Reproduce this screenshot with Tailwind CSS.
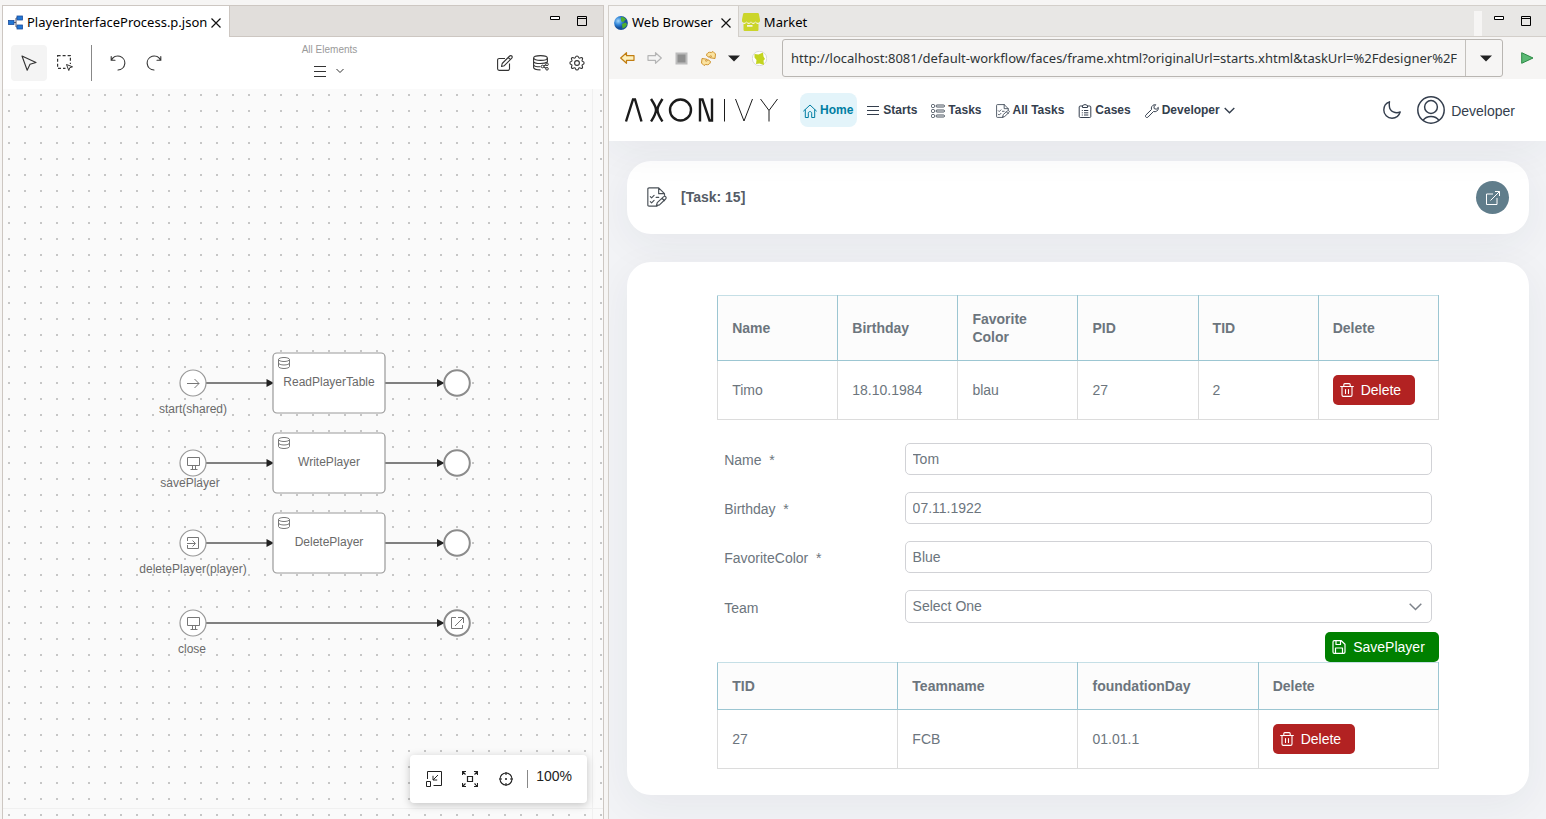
<!DOCTYPE html>
<html lang="en">
<head>
<meta charset="utf-8">
<title>Player Interface Process</title>
<script src="https://cdn.jsdelivr.net/npm/@tailwindcss/browser@4"></script>
</head>
<body class="h-screen overflow-hidden bg-[#f6f5f4] font-['Liberation_Sans',Arial,sans-serif] text-sm text-[#6c757d]">
<svg class="hidden">
  <defs>
    <symbol id="tasklist" viewBox="0 0 24 24"><g fill="none" stroke="currentColor" stroke-width="1.4" stroke-linejoin="round" stroke-linecap="round"><path d="M12 23H2.500C1.500 23 1 22.500 1 21.500v-19C1 1.500 1.500 1 2.500 1H14l7 7v2M14 1v7h7M4 11.500l1.500 1.500 3-3M4 17.500l1.500 1.500 3-3M11 12.500h3"/><path d="M20 11.500c1-1 2.700 0 3 1.200.1.700-.2 1.200-.7 1.700l-7.300 7-3.700 1 1-3.700zM18 13.500l3 3"/></g></symbol>
    <symbol id="trash" viewBox="0 0 14 14"><g fill="none" stroke="currentColor" stroke-width="1.1" stroke-linecap="round" stroke-linejoin="round"><path d="M.6 3.500h12.800M2 3.500v8.600c0 .8.500 1.300 1.300 1.300h7.400c.8 0 1.300-.5 1.300-1.300V3.500M3.800 3.300V1.700c0-.6.400-1.100 1-1.100h4.400c.6 0 1 .5 1 1.100v1.600M5.500 6.500v4M8.500 6.500v4"/></g></symbol>
    <symbol id="db" viewBox="0 0 12 12"><g fill="none" stroke="#777" stroke-width="1"><ellipse cx="6" cy="2.500" rx="5.500" ry="2"/><path d="M.5 2.500v7c0 1.100 2.500 2 5.500 2s5.500-.9 5.500-2v-7M.5 6c0 1.100 2.500 2 5.500 2s5.500-.9 5.500-2"/></g></symbol>
    <symbol id="monitor" viewBox="0 0 13 13"><path d="M.5.5h12v8H.5zM5.500 8.500v4M8.500 8.500v4M3.500 12.500h7" fill="none" stroke="#777"/></symbol>
  </defs>
</svg>

<div class="grid h-full grid-cols-[602fr_938fr] gap-1 pt-[5px] pl-0.5">

  <!-- Process editor -->
  <section class="flex min-w-0 flex-col border-x border-t border-[#cdc7c2] bg-white">
    <div class="flex h-[31px] shrink-0 bg-[#e1dedb] font-['Noto_Sans',sans-serif] text-[13px] text-black">
      <div class="flex items-center gap-1 border-r border-[#cdc7c2] bg-white pt-0.5 pr-2 pl-[5px]">
        <svg class="size-[15px]" viewBox="0 0 15 15"><path d="M5 7.500h3M10 3H8v9h2" fill="none" stroke="#556" stroke-width="1"/><g fill="#2277d4" stroke="#1c4d9c" stroke-width=".8"><rect x=".5" y="5.500" width="5.500" height="4"/><rect x="9" y="1" width="5.500" height="4"/><rect x="9" y="10" width="5.500" height="4"/></g></svg>
        <span>PlayerInterfaceProcess.p.json</span>
        <button aria-label="Close editor"><svg class="size-[10px]" viewBox="0 0 10 10"><path d="M.5.5l9 9M9.500.5l-9 9" stroke="#111" stroke-width="1.200"/></svg></button>
      </div>
      <div class="flex flex-1 items-start justify-end gap-[17px] border-b border-[#cdc7c2] pt-[10px] pr-4">
        <button aria-label="Minimize"><svg class="block h-1 w-[10px]"><path d="M.5.5h9v3h-9z" fill="#fff" stroke="#000"/></svg></button>
        <button aria-label="Maximize"><svg class="block size-[10px]"><path d="M.5.5h9v9h-9zM0 2.500h10" fill="none" stroke="#000"/></svg></button>
      </div>
    </div>

    <div class="flex h-[52px] shrink-0 items-center justify-between px-2 text-[#333]">
      <div class="flex items-center">
        <button class="grid size-9 place-items-center rounded-sm bg-[#f4f4f4]" aria-label="Select"><svg class="size-4" viewBox="0 0 16 16"><path d="M1 1l14 6.500-6 1.800-2.800 6z" fill="none" stroke="currentColor" stroke-width="1.100" stroke-linejoin="round"/></svg></button>
        <button class="grid size-9 place-items-center" aria-label="Marquee"><svg class="size-4" viewBox="0 0 16 16"><rect x=".6" y=".6" width="12.800" height="12.800" fill="none" stroke="currentColor" stroke-width="1.200" stroke-dasharray="3 2"/><path d="M8.500 9h7.500v7H8.500z" fill="#fff"/><path d="M9.500 9.500l6 2.300-2.700.9-1 2.800z" fill="#fff" stroke="currentColor" stroke-linejoin="round"/></svg></button>
        <div class="mx-2 h-9 w-px bg-[#888]"></div>
        <button class="grid size-9 place-items-center" aria-label="Undo"><svg class="size-4" viewBox="0 0 16 16"><path d="M1.200 1.500v3.800H5M1.500 5A7 7 0 1 1 8 15" fill="none" stroke="currentColor" stroke-width="1.100" stroke-linecap="round"/></svg></button>
        <button class="grid size-9 place-items-center" aria-label="Redo"><svg class="size-4" viewBox="0 0 16 16"><path d="M14.800 1.500v3.800H11M14.500 5A7 7 0 1 0 8 15" fill="none" stroke="currentColor" stroke-width="1.100" stroke-linecap="round"/></svg></button>
      </div>
      <div class="flex flex-col items-center gap-[9px] pb-1.5">
        <span class="text-[10px] leading-3 text-[#9a9a9a]">All Elements</span>
        <button class="flex items-center gap-2.5" aria-label="All elements"><svg class="h-[12px] w-3"><path d="M0 1.500h12M0 6.500h12M0 11.500h12" stroke="currentColor"/></svg><svg class="h-[6px] w-2"><path d="M.5 1L4 4.500 7.500 1" fill="none" stroke="currentColor"/></svg></button>
      </div>
      <div class="flex">
        <button class="grid size-9 place-items-center" aria-label="Edit"><svg class="size-4" viewBox="0 0 16 16"><g fill="none" stroke="currentColor" stroke-width="1.100" stroke-linejoin="round"><path d="M8 3.500H2.200C1.200 3.500.6 4 .6 5v8.800c0 1 .6 1.600 1.600 1.600H11c1 0 1.500-.6 1.500-1.600V8.500"/><path d="M4.500 11.500l.7-3L12.700 1c.6-.6 1.600-.5 2.100 0 .6.600.6 1.500 0 2.100L7.300 10.700zM11.300 2.500l2.100 2.100"/></g></svg></button>
        <button class="grid size-9 place-items-center" aria-label="Data"><svg class="size-4" viewBox="0 0 16 16"><g fill="none" stroke="currentColor" stroke-width="1.100"><ellipse cx="7.500" cy="3" rx="6.900" ry="2.400"/><path d="M.6 3v9.500c0 1.200 3 2.400 6.900 2.400M14.400 3v4.500M.6 6.200c0 1.300 3 2.300 6.900 2.300 3 0 5.500-.6 6.900-1.500M.6 9.400c0 1.300 3 2.400 6.900 2.400"/><path d="M10 11.500l3.500-2M10 11.500l3.500 2"/></g><g fill="#fff" stroke="currentColor"><circle cx="9.500" cy="11.500" r="1.300"/><circle cx="14" cy="9.300" r="1.300"/><circle cx="14" cy="13.800" r="1.300"/></g></svg></button>
        <button class="grid size-9 place-items-center" aria-label="Settings"><svg class="size-4" viewBox="0 0 16 16"><g fill="none" stroke="currentColor" stroke-width="1.100" stroke-linejoin="round"><path d="M6.500 2.200C7 .6 9 .6 9.500 2.200s1.500 1 2.300.6c1.300-.6 2.200.4 1.600 1.700-.4.800-.8 1.700.5 2 1.600.5 1.600 2.500 0 3-1.300.4-.9 1.200-.5 2 .6 1.300-.4 2.300-1.600 1.700-.8-.4-1.900-.9-2.300.6-.5 1.600-2.500 1.600-3 0-.4-1.500-1.500-1-2.300-.6-1.200.6-2.200-.4-1.600-1.700.4-.8.800-1.600-.5-2-1.600-.5-1.600-2.500 0-3 1.300-.3.900-1.200.5-2-.6-1.300.3-2.300 1.600-1.700.8.400 1.900 1 2.300-.6z"/><circle cx="8" cy="8" r="2.400"/></g></svg></button>
      </div>
    </div>

    <div class="relative min-h-0 flex-1 bg-[#fafafa]">
      <svg class="absolute inset-0 h-full w-full font-['Liberation_Sans',Arial,sans-serif] text-[12px]" role="img" aria-label="Process diagram">
        <defs>
          <pattern id="dots" x="5" y="5" width="16" height="16" patternUnits="userSpaceOnUse"><rect width="2" height="2" fill="#c6c6c6"/></pattern>
        </defs>
        <rect width="100%" height="100%" fill="url(#dots)"/>
        <path d="M589.500 0v730M0 719.500h600" stroke="#f0f0f0"/>
        <!-- edges -->
        <g stroke="#808080" stroke-width="2"><path d="M203 294h62M382 294h54M203 374h62M382 374h54M203 454h62M382 454h54M203 534h233"/></g>
        <g fill="#222"><path d="M263.500 290l7.500 4-7.500 4zM434 290l7.500 4-7.500 4zM263.500 370l7.500 4-7.500 4zM434 370l7.500 4-7.500 4zM263.500 450l7.500 4-7.500 4zM434 450l7.500 4-7.500 4zM434 530l7.500 4-7.500 4z"/></g>
        <!-- nodes -->
        <g fill="#fff" stroke="#999">
          <g stroke-width="1.200"><circle cx="190" cy="294" r="13"/><circle cx="190" cy="374" r="13"/><circle cx="190" cy="454" r="13"/><circle cx="190" cy="534" r="13"/>
          <rect x="270" y="264" width="112" height="60" rx="4"/><rect x="270" y="344" width="112" height="60" rx="4"/><rect x="270" y="424" width="112" height="60" rx="4"/></g>
          <g stroke="#8c8c8c" stroke-width="2"><circle cx="454" cy="294" r="12.800"/><circle cx="454" cy="374" r="12.800"/><circle cx="454" cy="454" r="12.800"/><circle cx="454" cy="534" r="12.800"/></g>
        </g>
        <use href="#db" x="275" y="268" width="12" height="12"/><use href="#db" x="275" y="348" width="12" height="12"/><use href="#db" x="275" y="428" width="12" height="12"/>
        <use href="#monitor" x="184" y="368" width="13" height="13"/><use href="#monitor" x="184" y="528" width="13" height="13"/>
        <g fill="none" stroke="#777"><path d="M184 294.500h12M191.500 290l4.500 4.500-4.500 4.500"/><path d="M184.500 452v-3.500h11v11h-11V456M184 454.500h8M189.500 451.500l3 3-3 3"/><path d="M453 528.500h-4.500v11h11V536M455 528.500h5.500v5.500M452 537l8-8"/></g>
        <g fill="#6a6a6a" text-anchor="middle"><text x="326" y="297">ReadPlayerTable</text><text x="326" y="377">WritePlayer</text><text x="326" y="457">DeletePlayer</text><text x="190" y="324">start(shared)</text><text x="187" y="398">savePlayer</text><text x="190" y="484">deletePlayer(player)</text><text x="189" y="564">close</text></g>
      </svg>
      <div class="absolute right-4 bottom-4 flex h-12 items-center rounded bg-white pr-[15px] pl-1.5 text-[#222] shadow-[0_2px_8px_rgba(0,0,0,0.22)]">
        <button class="grid size-9 place-items-center" aria-label="Origin screen"><svg class="size-4" viewBox="0 0 16 16"><path d="M1.500 8V.5h14v14H7.500M.5 10.500h4v5h-4zM12 4L7 9M7 4.800V9h4.200" fill="none" stroke="currentColor"/></svg></button>
        <button class="grid size-9 place-items-center" aria-label="Fit to screen"><svg class="size-4" viewBox="0 0 16 16"><path d="M5.500 5.500h5v5h-5zM.5 4V.5H4M.5.500L3.500 3.500M12 .5h3.500V4M15.500.500L12.500 3.500M.5 12v3.500H4M.5 15.500l3-3M12 15.500h3.500V12M15.500 15.500l-3-3" fill="none" stroke="currentColor" stroke-width="1.200"/></svg></button>
        <button class="grid size-9 place-items-center" aria-label="Center"><svg class="size-4" viewBox="0 0 16 16"><g fill="none" stroke="currentColor" stroke-width="1.100"><circle cx="8" cy="8" r="6"/><path d="M8 1v3M8 12v3M1 8h3M12 8h3M7 8h2M8 7v2"/></g></svg></button>
        <div class="mr-2 ml-[3px] h-[18px] w-px bg-[#888]"></div>
        <span class="pb-1.5">100%</span>
      </div>
    </div>
  </section>

  <!-- Web browser -->
  <section class="flex min-w-0 flex-col border-t border-l border-[#d3cfca]">
    <div class="flex h-[31px] shrink-0 bg-[#e8e7e5] font-['Noto_Sans',sans-serif] text-[13px] text-black">
      <div class="flex items-center gap-1 border-r border-[#d3cfca] bg-[#f6f5f4] pt-0.5 pr-[7px] pl-[5px]">
        <svg class="size-[14px]" viewBox="0 0 14 14"><defs><radialGradient id="globe" cx=".3" cy=".35"><stop offset="0" stop-color="#a5d8fa"/><stop offset=".6" stop-color="#2d82d6"/><stop offset="1" stop-color="#16509a"/></radialGradient></defs><circle cx="7" cy="7" r="6.900" fill="url(#globe)"/><path d="M7 1c2-.5 4 .8 5 2.500l-2 1.500-1 1.500-2-1.500zM8 8l3.500-1.500 1.500 1.500c-.7 2.500-2 3.700-4.500 4.500z" fill="#4fae2e"/></svg>
        <span>Web Browser</span>
        <button class="ml-1" aria-label="Close browser"><svg class="size-[10px]" viewBox="0 0 10 10"><path d="M.5.5l9 9M9.500.5l-9 9" stroke="#111" stroke-width="1.200"/></svg></button>
      </div>
      <div class="flex flex-1 items-center gap-1 border-b border-[#d3cfca] pl-[3px]">
        <svg class="mt-0.5 size-[18px]" viewBox="0 0 18 18"><path d="M1.500 8h15v8.500c0 1-.5 1.500-1.500 1.500H3c-1 0-1.500-.5-1.500-1.500z" fill="#cbd52a"/><path d="M0 8.500c0 3.300 4.500 3.300 4.500 0 0 3.300 4.500 3.300 4.500 0 0 3.300 4.500 3.300 4.500 0 0 3.300 4.500 3.300 4.500 0v-1H0zM5 12h5.500v1.800H5z" fill="#f6f5e8"/><path d="M2.500 0h13c.8 0 1.200.3 1.400 1L18 6.500V8c0 2.400-4.500 2.400-4.500 0 0 2.400-4.500 2.400-4.500 0 0 2.400-4.500 2.400-4.500 0C4.500 10.400 0 10.400 0 8V6.500L1.100 1c.2-.7.600-1 1.400-1z" fill="#cbd52a"/></svg>
        <span class="pt-0.5">Market</span>
        <div class="ml-auto h-full pt-[5px]"><div class="h-full w-2 bg-[#f6f5f4]"></div></div>
        <div class="flex h-full items-start gap-[17px] pt-[10px] pr-[15px] pl-2">
          <button aria-label="Minimize"><svg class="block h-1 w-[10px]"><path d="M.5.5h9v3h-9z" fill="#fff" stroke="#000"/></svg></button>
          <button aria-label="Maximize"><svg class="block size-[10px]"><path d="M.5.5h9v9h-9zM0 2.500h10" fill="none" stroke="#000"/></svg></button>
        </div>
      </div>
    </div>

    <div class="flex h-[42px] shrink-0 items-center pr-3 pl-[11px]">
      <div class="flex items-center gap-3">
        <button aria-label="Back"><svg class="h-3 w-[15px]" viewBox="0 0 15 12"><path d="M.7 6L6.500.7v3H14v4.600H6.500v3z" fill="#fdf0bd" stroke="#c17d11" stroke-width="1.200" stroke-linejoin="round"/></svg></button>
        <button aria-label="Forward"><svg class="h-3 w-[15px]" viewBox="0 0 15 12"><path d="M14.300 6L8.500.7v3H1v4.600h7.500v3z" fill="#f4f4f4" stroke="#b5b5b5" stroke-width="1.200" stroke-linejoin="round"/></svg></button>
        <button aria-label="Stop"><svg class="size-[15px]" viewBox="0 0 15 15"><rect x="2.500" y="2.500" width="10" height="10" fill="#8f8f8f" stroke="#bcbcbc" stroke-width="2"/></svg></button>
        <button aria-label="Refresh"><svg class="size-[15px]" viewBox="0 0 15 15"><g fill="#fbe3a0" stroke="#c98a20" stroke-width=".9" stroke-linejoin="round"><path d="M5.500 4.500C5.500 2 8 .6 10.300 1.500L12 .5l2.500 2.500-.5 4.500-4.800-.7L10.500 5C9 4.500 8.500 5 8.300 6.500z"/><path d="M9.500 10.500c0 2.500-2.500 3.900-4.800 3L3 14.500.5 12 1 7.500l4.800.7L4.500 10c1.500.5 2 0 2.200-1.500z"/></g></svg></button>
        <button aria-label="Refresh options"><svg class="h-[7px] w-3"><path d="M0 .5h12L6 6.500z" fill="#222"/></svg></button>
        <button aria-label="Axon Ivy home"><svg class="size-[15px]" viewBox="0 0 15 15"><circle cx="7.500" cy="7.500" r="7.200" fill="#fff" stroke="#ccc" stroke-width=".7"/><path d="M2.500 3l4 .5 4.500-2 .5 4 1.500 2.500-1.500 1.500.5 4.500-4.500-1.500-3.500.5.500-4-2-2.500z" fill="#c3d420"/></svg></button>
      </div>
      <div class="ml-[15px] flex h-[38px] min-w-0 flex-1 rounded-[3px] border border-[#b9b6b2]">
        <input class="min-w-0 flex-1 px-2 font-['Noto_Sans',sans-serif] text-[13px] text-[#2e3436] outline-none" aria-label="Address" value="http://localhost:8081/default-workflow/faces/frame.xhtml?originalUrl=starts.xhtml&amp;taskUrl=%2Fdesigner%2F">
        <button class="grid w-[37px] place-items-center border-l border-[#c3c0bc] pl-1" aria-label="History"><svg class="h-[7px] w-3"><path d="M0 .5h12L6 6.500z" fill="#222"/></svg></button>
      </div>
      <button class="ml-[18px]" aria-label="Go"><svg class="h-3 w-[13px]"><path d="M.7.7L12 6 .7 11.300z" fill="#5bb974" stroke="#2c8a45"/></svg></button>
    </div>

    <div class="flex min-h-0 flex-1 flex-col overflow-hidden bg-[#f2f3f6]">
      <header class="relative z-10 flex h-[62px] shrink-0 items-center bg-white pr-[30px] pl-[15px] text-[#343e4d] shadow-[0_10px_40px_rgba(41,50,65,0.06)]">
        <svg class="h-6 w-[154px]" viewBox="0 0 154 24" role="img" aria-label="Axon Ivy"><g fill="none" stroke="#1b1b1b"><path stroke-width="2.400" d="M2 23.500L9 1.500h2L17.500 23.500M27 1C29.500 5 32 8 32 12s-2.500 7.500-5 11.500M38.500 1c-2.500 4-5 7-5 11s2.500 7.500 5 11.500"/><circle cx="56.500" cy="12" r="10.500" stroke-width="2.400"/><path stroke-width="2.400" d="M76 23.500v-22h2.500l7 21h2.500v-22"/><path stroke-width="1" d="M100.500 1v22.500M111.500 1l8.500 22L128.500 1M136.500 1l8.500 11.500L153.500 1M145 12.500v11"/></g></svg>
        <nav class="ml-[22px] flex items-center gap-[6px] text-[12px] font-bold">
          <a href="#" class="flex h-[34px] items-center gap-[3px] rounded-lg bg-[#e3f4fa] pt-px pr-1 pl-[3px] text-[#007ea3]"><svg class="size-[14px]" viewBox="0 0 14 14"><path d="M.6 7L7 1l6.400 6M2.300 5.800v7.700h3V9.200c0-1 .7-1.600 1.700-1.600s1.700.6 1.700 1.600v4.300h3V5.800" fill="none" stroke="currentColor" stroke-linecap="round" stroke-linejoin="round"/></svg>Home</a>
          <a href="#" class="flex h-[34px] items-center gap-[3px] px-1 pt-px"><svg class="h-[13px] w-[13px]"><path d="M0 2.500h12M0 6.500h12M0 10.500h12" stroke="currentColor"/></svg>Starts</a>
          <a href="#" class="flex h-[34px] items-center gap-[3px] px-1 pt-px"><svg class="size-[14px]" viewBox="0 0 14 14"><g fill="none" stroke="currentColor" stroke-width=".9"><rect x=".5" y=".5" width="3" height="3" rx="1"/><rect x=".5" y="5.500" width="3" height="3" rx="1"/><rect x=".5" y="10.500" width="3" height="3" rx="1"/><rect x="5" y="1" width="8.500" height="2" rx="1"/><rect x="5" y="6" width="8.500" height="2" rx="1"/><rect x="5" y="11" width="8.500" height="2" rx="1"/></g></svg>Tasks</a>
          <a href="#" class="flex h-[34px] items-center gap-[3px] px-1 pt-px"><svg class="size-[14px]"><use href="#tasklist"/></svg>All Tasks</a>
          <a href="#" class="flex h-[34px] items-center gap-[3px] px-1 pt-px"><svg class="size-[14px]" viewBox="0 0 14 14"><path d="M4.500 2H2.200c-.6 0-1 .4-1 1v9.500c0 .6.400 1 1 1h9.600c.6 0 1-.4 1-1V3c0-.6-.4-1-1-1H9.500M4.500 1.500L7 .5l2.500 1v2h-5zM3.800 6.500h1M6 6.500h4.300M3.800 8.800h1M6 8.800h4.300M3.800 11h1M6 11h4.300" fill="none" stroke="currentColor"/></svg>Cases</a>
          <a href="#" class="flex h-[34px] items-center gap-[3px] px-1 pt-px"><svg class="size-[14px]" viewBox="0 0 14 14"><path d="M9.500.7c-2.300.4-3.700 2.600-3 4.800L.9 11c-.6.600-.6 1.500 0 2.100s1.500.6 2.100 0l5.500-5.600c2.300.8 4.600-.7 4.900-3.200l-.1-.9-2 1.800-2-.5-.4-1.800L10.700.7zM2 12h.1" fill="none" stroke="currentColor" stroke-linejoin="round"/></svg>Developer<svg class="ml-px h-[7px] w-[11px]"><path d="M.7 1l4.800 4.700L10.300 1" fill="none" stroke="currentColor" stroke-width="1.400"/></svg></a>
        </nav>
        <button class="ml-auto" aria-label="Dark mode"><svg class="size-[18px]" viewBox="0 0 18 18"><path d="M6.500.8C3 2 .8 5.200.8 9c0 4.600 3.700 8.200 8.200 8.200 3.800 0 7.100-2.600 8.200-6.200-4.500 2-10.500-.5-10.800-5.500C6.200 3.500 6.200 2 6.500.8z" fill="none" stroke="currentColor" stroke-width="1.400" stroke-linejoin="round"/></svg></button>
        <button class="mr-px ml-4 flex items-center gap-1.5"><svg class="size-7" viewBox="0 0 28 28"><g fill="none" stroke="currentColor" stroke-width="1.500"><circle cx="14" cy="14" r="13.200"/><circle cx="14" cy="11" r="6.400"/><path d="M6 24.500c2-3 4.500-4 8-4s6 1 8 4"/></g></svg><span class="pt-0.5">Developer</span></button>
      </header>

      <main class="flex flex-col gap-7 pt-5 pr-[17px] pl-[18px]">
        <div class="flex h-[73px] items-center rounded-3xl bg-white px-5 shadow-[0_10px_40px_rgba(41,50,65,0.06)]">
          <svg class="mb-0.5 size-5 text-[#495057]"><use href="#tasklist"/></svg>
          <h1 class="mb-0.5 ml-[14px] font-bold text-[#555c66]">[Task: 15]</h1>
          <button class="ml-auto grid size-[33px] place-items-center rounded-full bg-[#607d8b] text-white" aria-label="Open"><svg class="size-[14px]" viewBox="0 0 14 14"><path d="M7 3H.5v10.500H11V7M9 .5h4.500V5M13.500.5L4.500 9.500" fill="none" stroke="currentColor"/></svg></button>
        </div>

        <div class="rounded-3xl bg-white pt-[33px] pb-[26px] shadow-[0_10px_40px_rgba(41,50,65,0.06)]">
          <form class="mx-auto w-4/5" onsubmit="return false">
            <table class="w-full table-fixed border-collapse text-left leading-[18px] [&_td]:border [&_td]:border-[#dcdcdc] [&_td]:p-[14px] [&_th]:border [&_th]:border-x-[#9cc6d2] [&_th]:border-t-[#c5dfe6] [&_th]:border-b-[#9cc6d2] [&_th]:bg-[#fcfcfc] [&_th]:p-[14px]">
              <thead><tr><th>Name</th><th>Birthday</th><th>Favorite Color</th><th>PID</th><th>TID</th><th>Delete</th></tr></thead>
              <tbody><tr><td>Timo</td><td>18.10.1984</td><td>blau</td><td>27</td><td>2</td><td><button class="flex h-[30px] items-center gap-[7px] rounded-[5px] bg-[#b22222] pr-[14px] pl-[7px] text-white"><svg class="size-[14px]"><use href="#trash"/></svg>Delete</button></td></tr></tbody>
            </table>
            <div class="mt-[23px] grid grid-cols-[1fr_3fr] items-center gap-y-[17px] [&>*]:mx-[7px] [&>label]:pt-0.5">
              <label for="name">Name&nbsp; *</label>
              <input id="name" class="h-8 rounded-[5px] border border-[#d1d2d6] px-[7px]" value="Tom">
              <label for="birthday">Birthday&nbsp; *</label>
              <input id="birthday" class="h-8 rounded-[5px] border border-[#d1d2d6] px-[7px]" value="07.11.1922">
              <label for="color">FavoriteColor&nbsp; *</label>
              <input id="color" class="h-8 rounded-[5px] border border-[#d1d2d6] px-[7px]" value="Blue">
              <label for="team">Team</label>
              <div class="relative">
                <select id="team" class="block h-[33px] w-full appearance-none rounded-[5px] border border-[#d1d2d6] px-[7px] pb-0.5"><option>Select One</option></select>
                <svg class="pointer-events-none absolute top-[13px] right-[10px] h-2 w-[13px]"><path d="M.7.7l5.800 5.800L12.300.7" fill="none" stroke="#7d828a" stroke-width="1.500"/></svg>
              </div>
            </div>
            <button class="mt-[9px] ml-auto flex h-[30px] items-center gap-[7px] rounded-[5px] bg-[#008000] pr-[14px] pl-[7px] text-white"><svg class="size-[14px]" viewBox="0 0 14 14"><path d="M1 2c0-.8.500-1.300 1.300-1.300h7L13 4.300V12c0 .8-.5 1.300-1.300 1.300H2.300C1.500 13.300 1 12.800 1 12zM4 1v3.500h4.500V1M3.500 13V8h7v5" fill="none" stroke="currentColor" stroke-width="1.200" stroke-linejoin="round"/></svg>SavePlayer</button>
            <table class="w-full table-fixed border-collapse text-left leading-[18px] [&_td]:border [&_td]:border-[#dcdcdc] [&_td]:p-[14px] [&_th]:border [&_th]:border-x-[#9cc6d2] [&_th]:border-t-[#c5dfe6] [&_th]:border-b-[#9cc6d2] [&_th]:bg-[#fcfcfc] [&_th]:p-[14px]">
              <thead><tr><th>TID</th><th>Teamname</th><th>foundationDay</th><th>Delete</th></tr></thead>
              <tbody><tr><td>27</td><td>FCB</td><td>01.01.1</td><td><button class="flex h-[30px] items-center gap-[7px] rounded-[5px] bg-[#b22222] pr-[14px] pl-[7px] text-white"><svg class="size-[14px]"><use href="#trash"/></svg>Delete</button></td></tr></tbody>
            </table>
          </form>
        </div>
      </main>
    </div>
  </section>
</div>
</body>
</html>
